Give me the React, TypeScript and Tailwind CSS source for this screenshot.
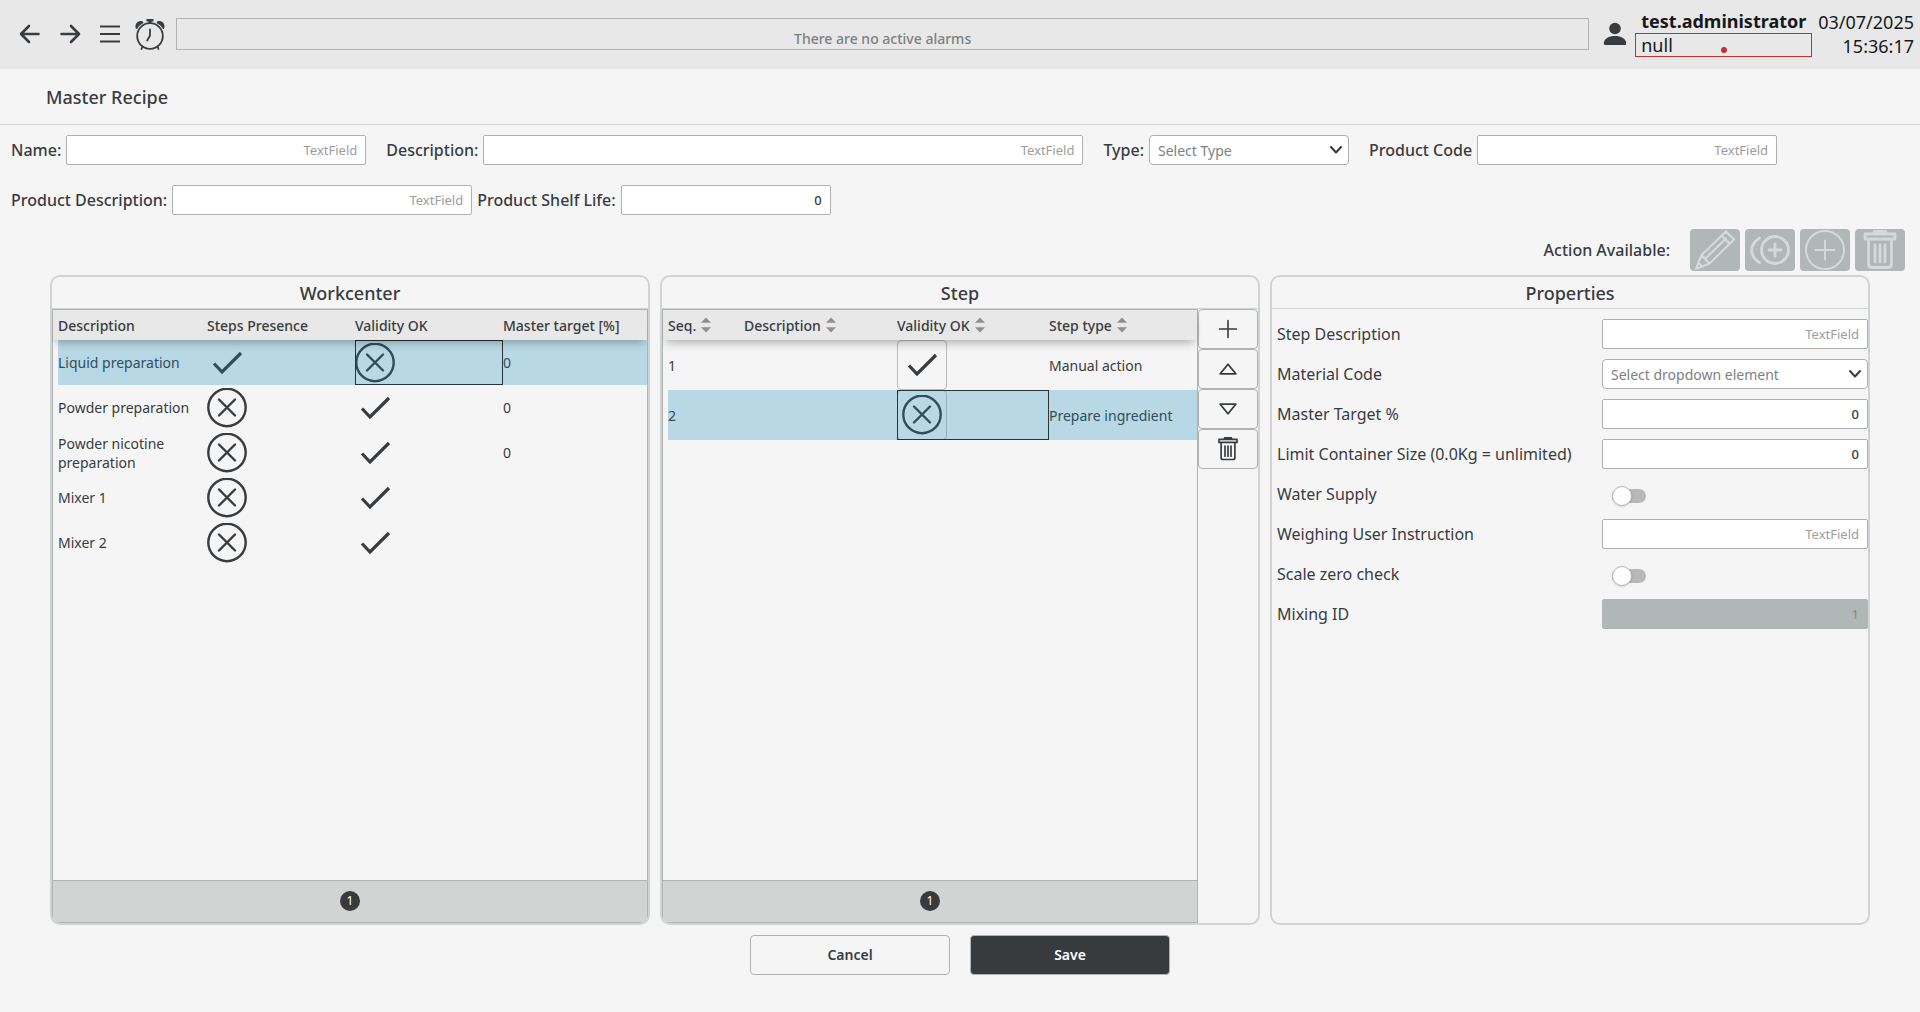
import React, { useState } from 'react';
import clsx from 'clsx';

interface WorkcenterRow {
  description: string;
  steps: boolean;
  valid: boolean;
  target?: number;
}

interface StepRow {
  seq: number;
  description: string;
  valid: boolean;
  type: string;
}

const WORKCENTERS: WorkcenterRow[] = [
  { description: 'Liquid preparation', steps: true, valid: false, target: 0 },
  { description: 'Powder preparation', steps: false, valid: true, target: 0 },
  { description: 'Powder nicotine preparation', steps: false, valid: true, target: 0 },
  { description: 'Mixer 1', steps: false, valid: true },
  { description: 'Mixer 2', steps: false, valid: true },
];

const STEPS: StepRow[] = [
  { seq: 1, description: '', valid: true, type: 'Manual action' },
  { seq: 2, description: '', valid: false, type: 'Prepare ingredient' },
];

/* ---------- icons ---------- */

const svgProps = {
  fill: 'none',
  stroke: 'currentColor',
  strokeLinecap: 'round' as const,
  strokeLinejoin: 'round' as const,
  'aria-hidden': true,
};

const ArrowIcon = ({ flip = false }: { flip?: boolean }) => (
  <svg {...svgProps} viewBox="0 0 24 24" strokeWidth="2.6" className={clsx('size-6', flip && 'rotate-180')}>
    <path d="M20.500 12H3.500M11 4L3 12l8 8" />
  </svg>
);

const MenuIcon = () => (
  <svg {...svgProps} viewBox="0 0 24 24" strokeWidth="2.2" strokeLinecap="butt" className="size-6">
    <path d="M2 4.500h20M2 12h20M2 19.500h20" />
  </svg>
);

const AlarmIcon = () => (
  <svg {...svgProps} viewBox="0 0 32 32" strokeWidth="1.800" className="size-8">
    <circle cx="16" cy="18" r="12.800" />
    <path d="M16 11.500v6l-2.800 5M8.500 28.500L7.500 31M23.500 28.500l1 2.500" />
    <path d="M12.500 1h7v2.500h-2V6h-3V3.500h-2z" fill="currentColor" stroke="none" />
    <path d="M2 11C0 6 4 1.500 8.800 3.500Q10 4.500 8.800 5.500C6 7 5.500 7.500 4 9.500Q3 11.500 2 11z" fill="currentColor" stroke="none" />
    <path d="M30 11C32 6 28 1.500 23.200 3.500Q22 4.500 23.200 5.500C26 7 26.500 7.500 28 9.500Q29 11.500 30 11z" fill="currentColor" stroke="none" />
  </svg>
);

const UserIcon = () => (
  <svg viewBox="0 0 24 24" fill="currentColor" className="size-6" aria-hidden="true">
    <circle cx="12" cy="6.500" r="5.800" />
    <path d="M.8 21.500C.8 16.500 6 14 12 14s11.200 2.500 11.200 7.500q0 1.500-1.500 1.500H2.300Q.8 23 .8 21.500z" />
  </svg>
);

const CheckIcon = () => (
  <svg {...svgProps} viewBox="0 0 40 40" strokeWidth="3.200" strokeLinecap="butt" strokeLinejoin="miter" className="size-10">
    <path d="M7 20.500l8 8.500L34 10" />
  </svg>
);

const CrossIcon = () => (
  <svg {...svgProps} viewBox="0 0 40 40" strokeWidth="2.400" className="size-10">
    <circle cx="20" cy="19.500" r="18.700" />
    <path d="M12 11.500l16 16M28 11.500l-16 16" />
  </svg>
);

const StatusIcon = ({ ok }: { ok: boolean }) => (ok ? <CheckIcon /> : <CrossIcon />);

const PencilIcon = () => (
  <svg {...svgProps} viewBox="0 0 40 40" strokeWidth="2.200" className="size-10">
    <path d="M1 39L6.500 25 31 1.500l8 8L14.500 33.500zM6.500 25l8 8.500M26.500 5.500l8 8M10 29L31 8.500M6.500 25.500l4 4 4 4M3.500 33l4 3.500" />
  </svg>
);

const DuplicateIcon = () => (
  <svg {...svgProps} viewBox="0 0 40 40" strokeWidth="2.800" className="size-10">
    <circle cx="25" cy="20" r="13.500" />
    <path d="M25 14v12M19 20h12M9.500 8C-1 15-1 26 9.500 32.500" />
  </svg>
);

const CirclePlusIcon = () => (
  <svg {...svgProps} viewBox="0 0 40 40" strokeWidth="2" className="size-10">
    <circle cx="20" cy="20" r="19" />
    <path d="M20 10.500v19M10.500 20h19" />
  </svg>
);

const TrashIcon = ({ className }: { className: string }) => (
  <svg {...svgProps} viewBox="0 0 40 40" strokeWidth="2.800" className={className}>
    <path d="M5 4h30v5H5zM14 2.500Q14 1 16 1h8q2 0 2 1.500M8.500 9v25q0 3.500 3.500 3.500h16q3.500 0 3.500-3.500V9M15 15v17M20 15v17M25 15v17" />
  </svg>
);

const PlusIcon = () => (
  <svg {...svgProps} viewBox="0 0 20 20" strokeWidth="1.600" className="size-5">
    <path d="M10 1.500v17M1.500 10h17" />
  </svg>
);

const TriangleIcon = ({ down = false }: { down?: boolean }) => (
  <svg {...svgProps} viewBox="0 0 20 20" strokeWidth="1.800" className={clsx('size-5', down && 'rotate-180')}>
    <path d="M10 5.200L17.800 14.800H2.200z" />
  </svg>
);

const SortIcon = () => (
  <svg viewBox="0 0 10 16" fill="#8f8f8f" className="h-4 w-[10px]" aria-hidden="true">
    <path d="M5 .5l5 5.200H0zM5 15.500l5-5.200H0z" />
  </svg>
);

/* ---------- form parts ---------- */

const inputClass =
  'h-[30px] rounded-[2px] border border-[#aeb0b1] bg-white px-2 text-right text-[13px] font-medium text-[#383c3f] placeholder-[#9b9d9e] placeholder:font-normal outline-none disabled:border-[#b1b6b6] disabled:bg-[#b1b6b6] disabled:font-normal disabled:text-[#85898b]';

interface FieldProps {
  id: string;
  width: string;
  value?: string;
  disabled?: boolean;
}

const TextInput: React.FC<FieldProps> = ({ id, width, value, disabled }) => (
  <input id={id} type="text" placeholder="TextField" defaultValue={value} disabled={disabled} className={clsx(inputClass, width)} />
);

const SelectInput: React.FC<{ id: string; width: string; placeholder: string }> = ({ id, width, placeholder }) => (
  <div className={clsx('relative', width)}>
    <select
      id={id}
      className="block h-[30px] w-full appearance-none rounded-[4px] border border-[#aeb0b1] bg-white pl-2 pr-7 text-[14px] text-[#7d8183] outline-none"
    >
      <option>{placeholder}</option>
    </select>
    <svg {...svgProps} viewBox="0 0 12 12" strokeWidth="2" className="pointer-events-none absolute right-[7px] top-[9px] size-3 text-[#383c3f]">
      <path d="M1 3l5 5.500L11 3" />
    </svg>
  </div>
);

const LabeledField: React.FC<{ id: string; label: string; children: React.ReactNode }> = ({ id, label, children }) => (
  <div className="flex items-center gap-[5px]">
    <label htmlFor={id} className="whitespace-nowrap text-[16px] font-medium">
      {label}
    </label>
    {children}
  </div>
);

const Toggle: React.FC<{ id: string }> = ({ id }) => (
  <input
    id={id}
    type="checkbox"
    role="switch"
    className="ml-[10px] mt-1 flex h-[14px] w-[34px] shrink-0 appearance-none items-center rounded-full bg-[#b8b8b8] before:block before:size-5 before:shrink-0 before:rounded-full before:border before:border-[#b4b6b7] before:bg-white before:shadow-sm checked:bg-[#6f9fb3] checked:before:ml-[14px]"
  />
);

const PropertyRow: React.FC<{ id: string; label: string; children: React.ReactNode }> = ({ id, label, children }) => (
  <div className="flex h-10 items-center justify-between pl-[5px]">
    <label htmlFor={id} className="whitespace-nowrap text-[16px]">
      {label}
    </label>
    <div className="flex w-[266px] items-center">{children}</div>
  </div>
);

/* ---------- panels ---------- */

const Panel: React.FC<{ title: string; children: React.ReactNode }> = ({ title, children }) => (
  <section className="flex min-w-0 flex-1 flex-col overflow-hidden rounded-[10px] border-2 border-[#d1d4d5]">
    <h2 className="flex h-8 shrink-0 items-center justify-center border-b border-[#d1d4d5] pt-[2px] text-[18px] font-medium">{title}</h2>
    {children}
  </section>
);

const Pager = () => (
  <div className="flex h-[42px] shrink-0 items-center justify-center border-t border-[#b0b3b4] bg-[#d2d4d4] pb-[2px]">
    <button type="button" className="flex size-5 items-center justify-center rounded-full bg-[#373b3e] text-[12px] text-white">
      1
    </button>
  </div>
);

const theadClass = 'relative z-10 bg-[#e8e8e8] shadow-[0_6px_8px_-3px_rgba(0,0,0,0.28)]';
const firstCell = 'border-l-[5px] border-transparent bg-clip-padding';
const activeCell = 'outline outline-1 -outline-offset-1 outline-[#2a3338]';
const selectedRow = 'text-[#2d4e5c] [&>td]:bg-[#b9d8e5]';

const WorkcenterTable = () => {
  const [selected, setSelected] = useState(0);

  return (
    <div className="flex flex-1 flex-col border border-[#b0b3b4]">
      <div className="flex-1">
        <table className="w-full table-fixed border-separate border-spacing-0 text-left text-[14px] leading-[19px]">
          <thead className={theadClass}>
            <tr className="h-[30px]">
              <th className="w-[154px] pl-[5px] font-medium">Description</th>
              <th className="w-[148px] font-medium">Steps Presence</th>
              <th className="w-[148px] font-medium">Validity OK</th>
              <th className="font-medium">Master target [%]</th>
            </tr>
          </thead>
          <tbody>
            {WORKCENTERS.map((row, i) => (
              <tr key={row.description} onClick={() => setSelected(i)} className={clsx('h-[45px]', i === selected && selectedRow)}>
                <td className={firstCell}>{row.description}</td>
                <td>
                  <StatusIcon ok={row.steps} />
                </td>
                <td className={clsx(i === selected && activeCell)}>
                  <StatusIcon ok={row.valid} />
                </td>
                <td>{row.target}</td>
              </tr>
            ))}
          </tbody>
        </table>
      </div>
      <Pager />
    </div>
  );
};

const SortHeader: React.FC<{ label: string; className?: string }> = ({ label, className }) => (
  <th className={clsx('font-medium', className)}>
    <span className="flex items-center gap-[5px]">
      {label}
      <SortIcon />
    </span>
  </th>
);

const sideButton = 'flex h-10 w-[60px] items-center justify-center rounded-[4px] border border-[#b0b3b4]';

const StepPanelBody = () => {
  const [selected, setSelected] = useState(1);

  return (
    <div className="flex flex-1">
      <div className="flex min-w-0 flex-1 flex-col border border-[#b0b3b4]">
        <div className="flex-1">
          <table className="w-full table-fixed border-separate border-spacing-0 text-left text-[14px] leading-[19px]">
            <thead className={theadClass}>
              <tr className="h-[30px]">
                <SortHeader label="Seq." className="w-[81px] pl-[5px]" />
                <SortHeader label="Description" className="w-[153px]" />
                <SortHeader label="Validity OK" className="w-[152px]" />
                <SortHeader label="Step type" />
              </tr>
            </thead>
            <tbody>
              {STEPS.map((row, i) => (
                <tr key={row.seq} onClick={() => setSelected(i)} className={clsx('h-[50px]', i === selected && selectedRow)}>
                  <td className={firstCell}>{row.seq}</td>
                  <td>{row.description}</td>
                  <td className={clsx(i === selected && activeCell)}>
                    <button
                      type="button"
                      aria-label={row.valid ? 'Valid' : 'Not valid'}
                      className={clsx(
                        'flex size-[50px] items-center justify-center rounded-[4px] border',
                        i === selected ? 'border-[#92b0bd]' : 'border-[#b9bbbc]'
                      )}
                    >
                      <StatusIcon ok={row.valid} />
                    </button>
                  </td>
                  <td>{row.type}</td>
                </tr>
              ))}
            </tbody>
          </table>
        </div>
        <Pager />
      </div>
      <div className="flex flex-col">
        <button type="button" aria-label="Add step" className={sideButton}>
          <PlusIcon />
        </button>
        <button type="button" aria-label="Move up" className={sideButton}>
          <TriangleIcon />
        </button>
        <button type="button" aria-label="Move down" className={sideButton}>
          <TriangleIcon down />
        </button>
        <button type="button" aria-label="Delete step" className={sideButton}>
          <TrashIcon className="size-6" />
        </button>
      </div>
    </div>
  );
};

const Properties = () => (
  <div className="flex flex-col pt-[5px]">
    <PropertyRow id="step-description" label="Step Description">
      <TextInput id="step-description" width="w-full" />
    </PropertyRow>
    <PropertyRow id="material-code" label="Material Code">
      <SelectInput id="material-code" width="w-full" placeholder="Select dropdown element" />
    </PropertyRow>
    <PropertyRow id="master-target" label="Master Target %">
      <TextInput id="master-target" width="w-full" value="0" />
    </PropertyRow>
    <PropertyRow id="container-size" label="Limit Container Size (0.0Kg = unlimited)">
      <TextInput id="container-size" width="w-full" value="0" />
    </PropertyRow>
    <PropertyRow id="water-supply" label="Water Supply">
      <Toggle id="water-supply" />
    </PropertyRow>
    <PropertyRow id="weighing-instruction" label="Weighing User Instruction">
      <TextInput id="weighing-instruction" width="w-full" />
    </PropertyRow>
    <PropertyRow id="scale-zero" label="Scale zero check">
      <Toggle id="scale-zero" />
    </PropertyRow>
    <PropertyRow id="mixing-id" label="Mixing ID">
      <TextInput id="mixing-id" width="w-full" value="1" disabled />
    </PropertyRow>
  </div>
);

/* ---------- page ---------- */

const navButton = 'flex size-10 items-center justify-center';

const TopBar = () => (
  <header className="flex h-[69px] items-center bg-[#e8e8e8] pb-[2px] pl-[10px] pr-[6px]">
    <button type="button" aria-label="Back" className={navButton}>
      <ArrowIcon />
    </button>
    <button type="button" aria-label="Forward" className={navButton}>
      <ArrowIcon flip />
    </button>
    <button type="button" aria-label="Menu" className={navButton}>
      <MenuIcon />
    </button>
    <button type="button" aria-label="Alarms" className={navButton}>
      <AlarmIcon />
    </button>
    <div className="ml-[6px] flex h-8 flex-1 items-end justify-center border border-[#b0b2b3] text-[14px] font-medium leading-[20px] text-[#7c8080]">
      There are no active alarms
    </div>
    <div className="ml-[14px]">
      <UserIcon />
    </div>
    <div className="ml-2 w-[177px] text-[18px] leading-[23px] text-[#16191b]">
      <div className="pl-[6px] font-bold">test.administrator</div>
      <div className="relative h-6 border border-[#c4302b] pl-[5px]">
        null
        <span className="absolute left-1/2 top-[13px] size-[6px] -translate-x-1/2 rounded-full bg-[#c4302b]" />
      </div>
    </div>
    <div className="ml-[6px] text-right text-[18px] leading-[24px] text-[#16191b]">
      <div>03/07/2025</div>
      <div>15:36:17</div>
    </div>
  </header>
);

const actionButton = 'flex h-[42px] w-[50px] items-center justify-center rounded-[4px] bg-[#b1b6b6] text-[#d6d9d9]';

export default function App() {
  return (
    <div className="flex min-h-screen flex-col bg-[#f5f5f5] font-['Noto_Sans',sans-serif] text-[#383c3f]">
      <TopBar />
      <h1 className="flex h-[56px] items-center border-b border-[#d1d3d4] pl-[46px] pt-[2px] text-[18px] font-medium">Master Recipe</h1>

      <div className="flex h-[50px] items-center gap-5 pl-[11px]">
        <LabeledField id="name" label="Name:">
          <TextInput id="name" width="w-[300px]" />
        </LabeledField>
        <LabeledField id="description" label="Description:">
          <TextInput id="description" width="w-[600px]" />
        </LabeledField>
        <LabeledField id="type" label="Type:">
          <SelectInput id="type" width="w-[200px]" placeholder="Select Type" />
        </LabeledField>
        <LabeledField id="product-code" label="Product Code">
          <TextInput id="product-code" width="w-[300px]" />
        </LabeledField>
      </div>
      <div className="flex h-[50px] items-center gap-[5px] pl-[11px]">
        <LabeledField id="product-description" label="Product Description:">
          <TextInput id="product-description" width="w-[300px]" />
        </LabeledField>
        <LabeledField id="shelf-life" label="Product Shelf Life:">
          <TextInput id="shelf-life" width="w-[210px]" value="0" />
        </LabeledField>
      </div>

      <div className="flex h-[50px] items-center justify-end gap-[5px] pr-[15px]">
        <span className="mr-[15px] text-[16px] font-medium">Action Available:</span>
        <button type="button" disabled aria-label="Edit" className={actionButton}>
          <PencilIcon />
        </button>
        <button type="button" disabled aria-label="Duplicate" className={actionButton}>
          <DuplicateIcon />
        </button>
        <button type="button" disabled aria-label="Add" className={actionButton}>
          <CirclePlusIcon />
        </button>
        <button type="button" disabled aria-label="Delete" className={actionButton}>
          <TrashIcon className="size-10" />
        </button>
      </div>

      <main className="flex flex-1 gap-[10px] px-[50px]">
        <Panel title="Workcenter">
          <WorkcenterTable />
        </Panel>
        <Panel title="Step">
          <StepPanelBody />
        </Panel>
        <Panel title="Properties">
          <Properties />
        </Panel>
      </main>

      <div className="flex justify-center gap-5 pb-[37px] pt-[10px] text-[14px] font-semibold">
        <button type="button" className="h-10 w-[200px] rounded-[4px] border border-[#b0b3b4] pb-[2px]">
          Cancel
        </button>
        <button type="button" className="h-10 w-[200px] rounded-[4px] border border-[#b0b3b4] bg-[#373b3e] pb-[2px] text-white">
          Save
        </button>
      </div>
    </div>
  );
}
